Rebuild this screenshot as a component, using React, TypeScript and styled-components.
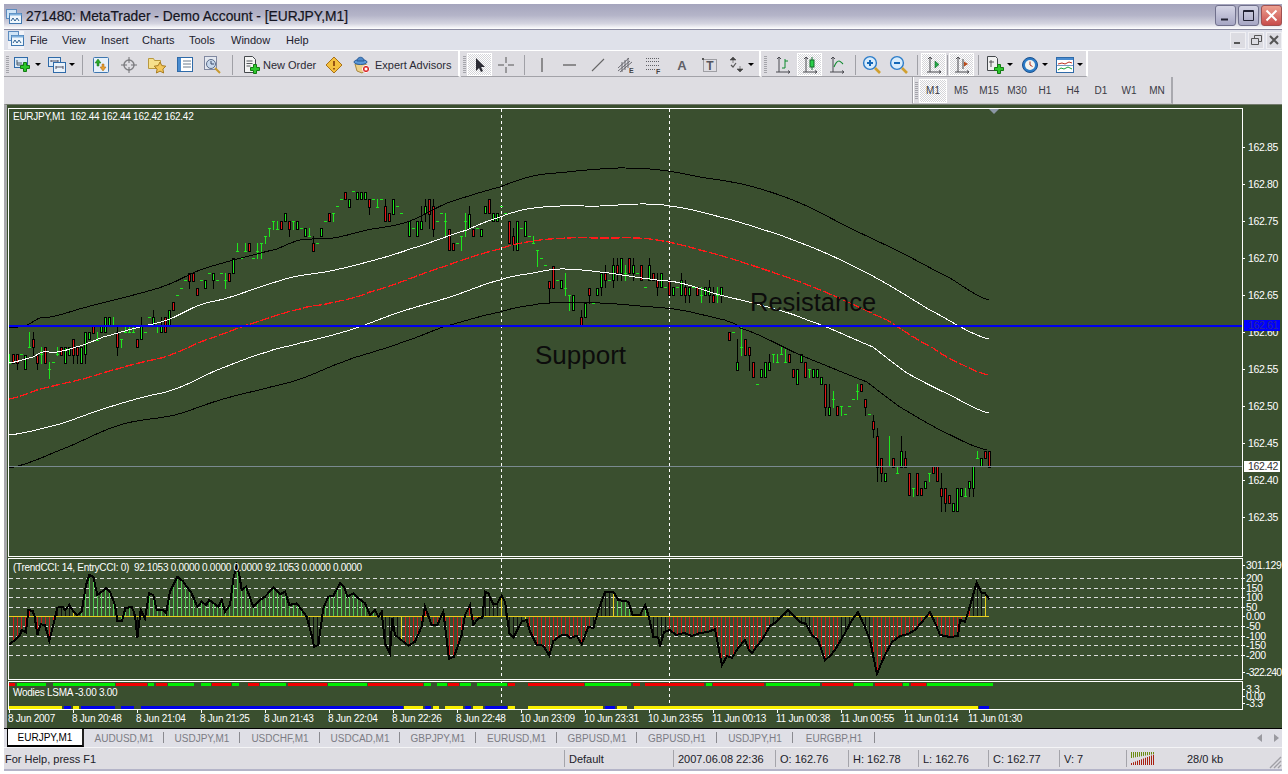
import React from 'react';
import styled, { createGlobalStyle } from 'styled-components';

const CHART_BG = '#3a4f2f';
const UI_FONT = '"Liberation Sans", Arial, sans-serif';

const GlobalStyle = createGlobalStyle`
  html, body {
    margin: 0;
    background: #fff;
    font-family: ${UI_FONT};
  }
`;

const Window = styled.div`
  display: flex;
  flex-direction: column;
  width: 1278px;
  margin: 4px 0 0 4px;
  overflow: hidden;
`;

/* title bar */

const TitleBar = styled.div`
  display: flex;
  align-items: center;
  height: 25px;
  padding: 0 0 0 2px;
  gap: 4px;
  background: linear-gradient(#a5a5bd 0%, #b4b4c8 45%, #d4d4e0 78%, #ffffff 100%);
  border-bottom: 1px solid #8c8ca2;
`;

const TitleText = styled.span`
  flex: 1;
  font-size: 13.8px;
  color: #141420;
  white-space: nowrap;
  -webkit-text-stroke: 0.2px #141420;
`;

const CaptionButtons = styled.div`
  display: flex;
  gap: 2px;
  margin-top: -2px;
`;

const CaptionButton = styled.div<{ $close?: boolean }>`
  display: flex;
  align-items: center;
  justify-content: center;
  width: 21px;
  height: 21px;
  box-sizing: border-box;
  border: 1px solid ${({ $close }) => ($close ? '#a05050' : '#70708c')};
  border-radius: 3px;
  background: ${({ $close }) =>
    $close ? 'linear-gradient(#eda090, #c84c4c)' : 'linear-gradient(#d6d6e6, #a6a6c4)'};
`;

/* menu bar */

const MenuBar = styled.div`
  display: flex;
  align-items: center;
  height: 20px;
  padding-left: 4px;
  background: #dfe1ea;
  font-size: 11px;
  color: #20202c;
`;

const MenuIcon = styled.div`
  width: 16px;
  height: 18px;
  margin-right: 6px;
  background: #f2f3f8;
`;

const MenuItem = styled.span<{ $w: number }>`
  width: ${({ $w }) => $w}px;
`;

const MdiButtons = styled.div`
  display: flex;
  gap: 2px;
  margin-left: auto;
`;

const MdiButton = styled.div`
  display: flex;
  align-items: center;
  justify-content: center;
  width: 16px;
  height: 17px;
  box-sizing: border-box;
  border: 1px solid #f0f0f4;
  background: #dcdce2;
`;

/* toolbars */

const ToolRow = styled.div`
  display: flex;
  height: 27px;
  box-sizing: border-box;
  border-top: 1px solid #fff;
  background: #dedde2;
`;

const ToolBar = styled.div`
  display: flex;
  align-items: center;
  box-sizing: border-box;
  height: 26px;
  padding-top: 2px;
  border-bottom: 1px solid #a2a2a8;
  border-right: 2px solid #fff;
  margin-right: 1px;
`;

const Grip = styled.div`
  width: 3px;
  height: 18px;
  margin: 0 1px 0 2px;
  background: repeating-linear-gradient(#a4a4aa 0 1px, transparent 1px 2px);
`;

const ToolButton = styled.div<{ $w: number; $pressed?: boolean }>`
  display: flex;
  align-items: center;
  justify-content: center;
  flex: none;
  width: ${({ $w }) => $w}px;
  height: 23px;
  box-sizing: border-box;
  ${({ $pressed }) =>
    $pressed &&
    `border: 1px solid #fff;
     background: repeating-conic-gradient(#ffffff 0 25%, #d4d4d8 0 50%) 0 0 / 2px 2px;`}
`;

const DropButton = styled(ToolButton)`
  justify-content: flex-start;
  gap: 3px;
  padding-left: ${({ $w }) => ($w > 34 ? 5 : 4)}px;
`;

const TextButton = styled(ToolButton)<{ $gap: number }>`
  justify-content: flex-start;
  gap: ${({ $gap }) => $gap}px;
  padding-left: 6px;
  font-size: 11px;
  color: #2a2a34;
  white-space: nowrap;
`;

const Caret = styled.span`
  width: 0;
  height: 0;
  border-left: 3px solid transparent;
  border-right: 3px solid transparent;
  border-top: 3px solid #000;
`;

const ToolSep = styled.div<{ $w: number }>`
  display: flex;
  justify-content: center;
  flex: none;
  width: ${({ $w }) => $w}px;

  &::before {
    content: '';
    width: 1px;
    height: 20px;
    background: #a0a0a6;
  }
`;

const PeriodRow = styled.div`
  display: flex;
  justify-content: flex-start;
  height: 27px;
  padding-left: 908px;
  background: #dedde2;
`;

const PeriodBar = styled.div`
  display: flex;
  align-items: center;
  box-sizing: border-box;
  height: 27px;
  padding-top: 1px;
  border-left: 1px solid #a2a2a8;
  border-right: 2px solid #a8a8ae;
  box-shadow: inset 1px 0 0 #fff;
  border-bottom: 1px solid #c8c8cc;
`;

const PeriodButton = styled(ToolButton)`
  width: 28px;
  height: 24px;
  font-size: 10px;
  color: #3a3a44;
`;

/* chart */

const ChartArea = styled.div`
  display: flex;
  flex-direction: column;
  box-sizing: border-box;
  height: 624px;
  padding: 3px 0 0 1px;
  background: ${CHART_BG};
  border-left: 3px solid #a8a8ac;
  border-top: 1px solid #727a6c;
  margin-top: 0;
`;

const PaneRow = styled.div<{ $h: number; $gap?: number }>`
  display: flex;
  height: ${({ $h }) => $h}px;
  margin-bottom: ${({ $gap }) => $gap ?? 0}px;
`;

const Pane = styled.div`
  position: relative;
  width: 1235px;
  flex: none;
  box-sizing: border-box;
  border: 1px solid #fff;
  overflow: hidden;

  svg {
    display: block;
  }
`;

const PaneLegend = styled.span<{ $top: number }>`
  position: absolute;
  left: 4px;
  top: ${({ $top }) => $top}px;
  font-size: 10px;
  letter-spacing: -0.28px;
  color: #fff;
  white-space: pre;
`;

const ChartNote = styled.span<{ $x: number; $y: number; $size: number }>`
  position: absolute;
  left: ${({ $x }) => $x}px;
  top: ${({ $y }) => $y}px;
  font-size: ${({ $size }) => $size}px;
  line-height: 30px;
  color: #0c0c0c;
`;

const ShiftMarker = styled.div`
  position: absolute;
  left: 980px;
  top: 0;
  width: 0;
  height: 0;
  border-left: 5px solid transparent;
  border-right: 5px solid transparent;
  border-top: 5px solid #8a96a4;
`;

const Axis = styled.div`
  position: relative;
  flex: 1;
  overflow: hidden;
`;

const AxisLabel = styled.span<{ $y: number; $left?: number; $tight?: boolean }>`
  position: absolute;
  left: ${({ $left }) => $left ?? 5}px;
  top: ${({ $y }) => $y - 6}px;
  font-size: 10.5px;
  letter-spacing: ${({ $tight }) => ($tight ? -0.75 : -0.35)}px;
  line-height: 12px;
  color: #fff;
  white-space: nowrap;

  &::before {
    content: '';
    position: absolute;
    left: ${({ $left }) => -($left ?? 5)}px;
    top: 6px;
    width: 2px;
    height: 1px;
    background: #fff;
  }
`;

const PriceTag = styled.span<{ $y: number; $blue?: boolean }>`
  position: absolute;
  left: 1px;
  top: ${({ $y }) => $y}px;
  width: 36px;
  height: 11px;
  padding-left: 4px;
  box-sizing: border-box;
  font-size: 10.5px;
  letter-spacing: -0.35px;
  line-height: 11px;
  color: ${({ $blue }) => ($blue ? '#2a2a9a' : '#333')};
  background: ${({ $blue }) => ($blue ? '#0000ff' : '#fff')};
`;

const TimeAxis = styled.div`
  display: flex;
  height: 19px;
`;

const TimeLabel = styled.span`
  position: relative;
  width: 64px;
  flex: none;
  padding-top: 3px;
  box-sizing: border-box;
  font-size: 10px;
  letter-spacing: -0.25px;
  line-height: 12px;
  color: #fff;
  white-space: nowrap;

  &::before {
    content: '';
    position: absolute;
    left: 1px;
    top: 0;
    width: 1px;
    height: 3px;
    background: #fff;
  }
`;

/* tabs */

const TabStrip = styled.div`
  display: flex;
  align-items: stretch;
  box-sizing: border-box;
  height: 20px;
  padding-left: 3px;
  background: #dfdfe6;
  border-top: 1px solid #000;
  border-bottom: 1px solid #f4f4f6;
`;

const Tab = styled.div<{ $w: number; $active?: boolean }>`
  position: relative;
  display: flex;
  align-items: center;
  justify-content: center;
  flex: none;
  width: ${({ $w }) => $w}px;
  box-sizing: border-box;
  font-size: 10px;
  color: ${({ $active }) => ($active ? '#000' : '#7c7c84')};
  ${({ $active }) =>
    $active
      ? `background: #fff;
         border-left: 1px solid #000;
         border-right: 2px solid #222;
         border-bottom: 2px solid #000;`
      : `&::after {
           content: '';
           position: absolute;
           right: 0;
           top: 3px;
           bottom: 4px;
           width: 1px;
           background: #8a8a90;
         }`}
`;

const TabArrows = styled.div`
  display: flex;
  align-items: center;
  gap: 12px;
  margin-left: auto;
  padding-right: 3px;
`;

/* status bar */

const StatusBar = styled.div`
  display: flex;
  align-items: stretch;
  height: 21px;
  background: #dedde2;
  border-bottom: 2px solid #b4b4c8;
  font-size: 11px;
  color: #202028;
`;

const StatusCell = styled.div<{ $w: number }>`
  display: flex;
  align-items: center;
  flex: none;
  width: ${({ $w }) => $w}px;
  box-sizing: border-box;
  padding-left: 5px;
  white-space: nowrap;
  background: linear-gradient(#a4a4aa, #a4a4aa) left center / 1px 17px no-repeat;
`;

const PlainCell = styled(StatusCell)`
  padding-left: 1px;
  background: none;
`;

const TrafficCell = styled(StatusCell)`
  flex: 1;
  gap: 32px;
  padding-left: 5px;
`;

const SizeGrip = styled.svg`
  align-self: flex-end;
  margin-left: auto;
  flex: none;
`;

/* ------------- drawings ------------- */

const Icon = styled.svg`
  display: block;
  flex: none;
`;

const Plus = ({ x, y }: { x: number; y: number }) => (
  <path
    d={`M${x + 3.5} ${y + 0.5}h3v3h3v3h-3v3h-3v-3h-3v-3h3z`}
    fill="#2cc82c"
    stroke="#137a13"
  />
);

const AppGlyph = () => (
  <Icon width="16" height="16" viewBox="0 0 16 16">
    <rect x="0.5" y="0.5" width="10" height="9" fill="#cfe4f6" stroke="#5b8bbf" />
    <rect x="3.5" y="4.5" width="12" height="10" fill="#eef6fc" stroke="#3f77b0" />
    <rect x="3.5" y="4.5" width="12" height="2" fill="#7fb0dc" />
    <path d="M5 12l2-3 2 3 2-3 2 3" fill="none" stroke="#2f5f90" />
  </Icon>
);

const NewChartIcon = () => (
  <Icon width="18" height="18" viewBox="0 0 18 18">
    <rect x="0.5" y="1.5" width="13" height="10" fill="#d8e8f6" stroke="#2f6aa8" />
    <path d="M3 4v5h8M3 7h5" fill="none" stroke="#4a5a6a" />
    <Plus x={6} y={6} />
  </Icon>
);

const ProfilesIcon = () => (
  <Icon width="18" height="18" viewBox="0 0 18 18">
    <rect x="0.5" y="1.5" width="12" height="9" fill="#dfeaf6" stroke="#2f6aa8" />
    <rect x="5.5" y="6.5" width="12" height="10" fill="#eaf2fa" stroke="#2f6aa8" />
    <path d="M3 5h7M3 4v2M10 4v2M8 11h7M8 10v3M15 10v3" stroke="#556" fill="none" />
  </Icon>
);

const MarketWatchIcon = () => (
  <Icon width="18" height="18" viewBox="0 0 18 18">
    <rect x="1.5" y="1.5" width="15" height="15" rx="1" fill="#e6f0fa" stroke="#3f77b0" />
    <path d="M6 3l3 4H7v3H5V7H3z" fill="#28a828" stroke="#187018" strokeWidth="0.5" />
    <path d="M11 15l-3-4h2V8h2v3h2z" fill="#e8a030" stroke="#a06010" strokeWidth="0.5" />
  </Icon>
);

const TargetIcon = () => (
  <Icon width="18" height="18" viewBox="0 0 18 18">
    <circle cx="9" cy="9" r="5" fill="none" stroke="#808084" strokeWidth="1.4" />
    <path d="M9 1v6M9 11v6M1 9h6M11 9h6" stroke="#707074" />
  </Icon>
);

const FavoritesIcon = () => (
  <Icon width="20" height="20" viewBox="0 0 20 20">
    <path d="M1.5 3.5h5l1 2h6v8h-12z" fill="#f6e08c" stroke="#b89840" />
    <path d="M13 7l1.8 3.6 4 .6-2.9 2.8.7 4-3.6-1.9-3.6 1.9.7-4-2.9-2.8 4-.6z" fill="#f4c85c" stroke="#a87c20" />
  </Icon>
);

const NavigatorIcon = () => (
  <Icon width="17" height="17" viewBox="0 0 17 17">
    <rect x="0.5" y="1.5" width="15" height="14" fill="#fff" stroke="#2f6aa8" />
    <rect x="1" y="2" width="3" height="13" fill="#4a8cd0" />
    <path d="M6 5h8M6 8h8M6 11h8" stroke="#6a7a8c" />
  </Icon>
);

const TesterIcon = () => (
  <Icon width="20" height="20" viewBox="0 0 20 20">
    <rect x="1.5" y="1.5" width="12" height="13" fill="#e4e8f0" stroke="#8088a0" />
    <circle cx="8" cy="9" r="4.5" fill="#c8d8ec" stroke="#5a6a88" />
    <path d="M8 6v3h3" stroke="#384868" fill="none" />
    <path d="M12 13l5 5" stroke="#c89a30" strokeWidth="2" />
  </Icon>
);

const NewOrderIcon = () => (
  <Icon width="18" height="20" viewBox="0 0 18 20">
    <path d="M1.5 1.5h8l3 3v13h-11z" fill="#f4f4f4" stroke="#44484c" />
    <path d="M3.5 6h6M3.5 8.5h6M3.5 11h4" stroke="#55585c" />
    <Plus x={7} y={9} />
  </Icon>
);

const WarnIcon = () => (
  <Icon width="18" height="18" viewBox="0 0 18 18">
    <path d="M9 1l8 8-8 8-8-8z" fill="#f4c040" stroke="#a87018" />
    <path d="M9 5v5M9 12v1.6" stroke="#803808" strokeWidth="1.6" />
  </Icon>
);

const ExpertIcon = () => (
  <Icon width="18" height="18" viewBox="0 0 18 18">
    <path d="M2 8h11v6l-4 3-5-2z" fill="#ecd088" stroke="#a88840" />
    <ellipse cx="7.5" cy="6" rx="6.5" ry="2.5" fill="#5c9ad8" stroke="#2c5c98" />
    <path d="M4 5c0-5 7-5 7 0z" fill="#4c88c8" stroke="#2c5c98" />
    <circle cx="13" cy="13" r="3.6" fill="#d81818" stroke="#fff" />
    <rect x="11.6" y="11.6" width="2.8" height="2.8" fill="#fff" />
  </Icon>
);

const PointerIcon = () => (
  <Icon width="12" height="16" viewBox="0 0 12 16">
    <path d="M2 1v13l3-3 2 4 2-1-2-4h4z" fill="#2c2c34" />
  </Icon>
);

const CrossIcon = () => (
  <Icon width="16" height="16" viewBox="0 0 16 16">
    <path d="M8 0v6M8 10v6M0 8h6M10 8h6" stroke="#555" />
  </Icon>
);

const VLineIcon = () => (
  <Icon width="14" height="14" viewBox="0 0 14 14">
    <path d="M7 0v14" stroke="#555" strokeWidth="1.2" />
  </Icon>
);

const HLineIcon = () => (
  <Icon width="14" height="14" viewBox="0 0 14 14">
    <path d="M0 7h13" stroke="#555" strokeWidth="1.2" />
  </Icon>
);

const DiagLineIcon = () => (
  <Icon width="14" height="14" viewBox="0 0 14 14">
    <path d="M1 13L13 1" stroke="#666" strokeWidth="1.1" />
  </Icon>
);

const FibChannelIcon = () => (
  <Icon width="18" height="18" viewBox="0 0 18 18">
    <path d="M1 12L12 2M1 15L13 5M3 16L15 6M5 6v10M8 4v10M11 2v10" stroke="#606066" fill="none" strokeWidth="0.9" />
    <text x="12" y="17" fontSize="7" fontWeight="700" fill="#444" fontFamily={UI_FONT}>E</text>
  </Icon>
);

const FibLinesIcon = () => (
  <Icon width="18" height="18" viewBox="0 0 18 18">
    <path d="M1 2.5h13M1 5.5h13M1 9.5h13M1 13.5h9" stroke="#606066" strokeDasharray="1 1" fill="none" />
    <text x="11" y="17.5" fontSize="7" fontWeight="700" fill="#444" fontFamily={UI_FONT}>F</text>
  </Icon>
);

const TextToolIcon = () => (
  <Icon width="16" height="16" viewBox="0 0 16 16">
    <text x="8" y="13" textAnchor="middle" fontSize="13" fontWeight="700" fill="#606066" fontFamily={UI_FONT}>A</text>
  </Icon>
);

const LabelToolIcon = () => (
  <Icon width="16" height="16" viewBox="0 0 16 16">
    <rect x="1.5" y="2.5" width="13" height="12" fill="none" stroke="#606066" strokeDasharray="1 1" />
    <rect x="0" y="1" width="2" height="2" fill="#555" />
    <text x="8" y="13" textAnchor="middle" fontSize="12" fontWeight="700" fill="#55555c" fontFamily={UI_FONT}>T</text>
  </Icon>
);

const ArrowsIcon = () => (
  <Icon width="16" height="16" viewBox="0 0 16 16">
    <path d="M4 0l3 3H1zM4 3v3M11 15l-3-3h6zM11 12V9" fill="#444" stroke="#444" strokeWidth="0.6" />
    <path d="M2 8l2 2 3-4" fill="none" stroke="#555" strokeWidth="1.2" />
  </Icon>
);

const Axes = () => <path d="M4 1v15M1 16h14M4 1l-2 2M4 1l2 2M15 16l-2-1.5M15 16l-2 1.5" stroke="#4a4a50" fill="none" />;

const BarChartIcon = () => (
  <Icon width="16" height="18" viewBox="0 0 16 18">
    <Axes />
    <path d="M10 3v9M7 12h3M10 5h3" stroke="#0a8a2a" fill="none" />
  </Icon>
);

const CandleChartIcon = () => (
  <Icon width="16" height="18" viewBox="0 0 16 18">
    <Axes />
    <path d="M10 1v13" stroke="#107030" />
    <rect x="8" y="4" width="4" height="7" fill="#28d048" stroke="#106a28" />
  </Icon>
);

const LineChartIcon = () => (
  <Icon width="16" height="18" viewBox="0 0 16 18">
    <Axes />
    <path d="M5 11c2-5 4-6 5-6s3 2 4 3" fill="none" stroke="#108a30" strokeWidth="1.1" />
  </Icon>
);

const ZoomIcon = ({ plus }: { plus?: boolean }) => (
  <Icon width="20" height="20" viewBox="0 0 20 20">
    <circle cx="8" cy="8" r="6.4" fill="#d8ecfc" stroke="#2c7cc8" strokeWidth="1.4" />
    <path d="M5 8h6" stroke="#1468b8" strokeWidth="2" />
    {plus && <path d="M8 5v6" stroke="#1468b8" strokeWidth="2" />}
    <path d="M13 13l5 5" stroke="#d0a030" strokeWidth="2.6" />
  </Icon>
);

const AutoScrollIcon = () => (
  <Icon width="16" height="18" viewBox="0 0 16 18">
    <Axes />
    <path d="M9 5v7l4-3.5z" fill="#24a848" stroke="#106a28" strokeWidth="0.6" />
  </Icon>
);

const ChartShiftIcon = () => (
  <Icon width="16" height="18" viewBox="0 0 16 18">
    <Axes />
    <path d="M9 3v10" stroke="#444" />
    <path d="M14 8l-4-2.5v5z" fill="#b84818" />
  </Icon>
);

const IndicatorsIcon = () => (
  <Icon width="18" height="20" viewBox="0 0 18 20">
    <path d="M1.5 1.5h8l2 2v12h-10z" fill="#f0f0f0" stroke="#44484c" />
    <path d="M5 5v7M3 7h5" stroke="#555" />
    <Plus x={8} y={9} />
  </Icon>
);

const ClockIcon = () => (
  <Icon width="18" height="18" viewBox="0 0 18 18">
    <circle cx="9" cy="9" r="7.5" fill="#2c7cc8" stroke="#1c508c" />
    <circle cx="9" cy="9" r="5" fill="#f4f4ee" />
    <path d="M9 5.5V9l2.5 1.5" stroke="#b03020" fill="none" />
  </Icon>
);

const TemplateIcon = () => (
  <Icon width="18" height="16" viewBox="0 0 18 16">
    <rect x="0.5" y="0.5" width="17" height="15" fill="#fff" stroke="#2f6aa8" />
    <rect x="1" y="1" width="16" height="2" fill="#4a8cd0" />
    <path d="M2 7l4-1 3 1 4-2 3 1" stroke="#c03020" fill="none" />
    <path d="M1 8.5h16" stroke="#7a9ac0" />
    <path d="M2 13l3-2 3 1 4-2 4 2" stroke="#18a038" fill="none" />
  </Icon>
);

const TrafficIcon = () => (
  <Icon width="24" height="13" viewBox="0 0 24 13">
    {Array.from({ length: 12 }, (_, i) => (
      <g key={i}>
        <rect x={i * 2} y="0" width="1" height={Math.max(1, 6 - i * 0.35)} fill="#6a8a10" />
        <rect x={i * 2} y={11 - i * 0.75} width="1" height={2 + i * 0.75} fill="#a82010" />
      </g>
    ))}
  </Icon>
);

/* ------------- chart data, read off the picture at 3x ------------- */

// [kind, x, top, bottom, wickTop?, wickBottom?]; kind r/g = candle, d = doji, t = lone tick
type Bar = [string, number, number, number?, number?, number?];

const segA: Bar[] = [
  ['d',28,552,578,578],['r',40,552,578],['r',52,552,578,552,598],['t',64,553],['g',76,554,598],['d',88,487,532,532],
  ['r',100,508,532,487,555],['r',112,556,578,556,598],['d',124,532,578,553],['r',136,532,578],['d',148,576,623,598],
  ['t',160,577],['d',172,532,555,553],['r',184,532,554],['g',196,532,578],['g',208,532,554],['r',220,508,554,508,578],
  ['r',232,532,554,532,578],['g',244,532,578],['g',256,487,553,487,578],['g',268,487,508],['r',280,464,488],['d',292,487,510,510],
  ['g',304,464,487],['g',316,442,487],['g',328,442,464],['d',340,442,464,464],['r',352,487,532,471,555],['d',364,508,532,508],
  ['d',376,470,487,487],['d',388,470,487,487],['d',400,470,487,487],['r',412,508,532],['g',424,464,508,442,508],['t',436,487],
  ['t',448,442],['g',460,442,464,420,464],['d',472,464,487,464],['g',484,464,487,442,487],['r',496,442,487],['g',508,420,464],
  ['r',520,397,420],['t',532,376],['t',544,355],['t',556,331],['r',568,310,332,310,355],['r',580,310,332],['r',592,355,376],
  ['t',604,331],['g',616,331,355],['t',628,310],['g',640,310,331,310,355],['t',652,331],['t',664,310],['d',676,310,355,331],
  ['r',688,310,332],['g',700,265,310],['d',712,220,242,242],['t',724,265],['d',736,220,242,242],['r',748,220,242],['t',760,265],
  ['d',772,220,265,242],['d',784,220,265,220],['d',796,198,220,198],['d',808,175,198,175],['d',820,153,176,153],['d',832,153,176,176],
  ['r',844,153,176],['g',856,130,153],['r',868,153,176,153,198],['d',880,153,176,153],['g',892,153,176],
];

const segB: Bar[] = [
  ['t',4,175],['g',16,175,198],['d',28,175,198,198],['r',40,220,242,198,242],['t',52,220],['g',64,175,198],['t',76,154],['r',88,130,154],
  ['d',100,130,154,130],['t',112,109],['t',124,87],['r',136,65,88],['g',148,88,110],['t',160,64],['g',172,65,88],['g',184,65,88],
  ['g',196,65,88],['r',208,88,110,88,131],['t',220,87],['d',232,87,110,110],['t',244,87],['r',256,109,154,87,154],['r',268,130,154],
  ['g',280,88,131],['t',292,109],['t',304,130],['g',328,154,199],['t',340,175],['g',352,154,199],['g',364,154,176,108,176],
  ['g',376,109,130,87,154],['r',388,88,131,87,175],['r',400,109,176,87,199],['t',412,154],['t',424,130],['d',436,130,197,154],
  ['r',448,176,241],['r',460,220,241],['t',472,219],['d',484,198,241,198],['d',496,130,199,154],['g',508,131,175,109,175],
  ['r',520,176,199],['t',532,175],['g',544,176,199],['g',556,109,130],['r',568,88,130],['g',580,130,154],['g',592,130,154],
  ['t',604,108],['t',616,130],['r',628,154,220],['r',640,199,221,175,241],['g',652,154,241],['t',664,175],['g',676,154,199],
  ['t',688,198],['d',700,198,220,220],['d',712,241,287,241],['t',724,265],['t',736,286],['r',748,332,355,332,398],['r',760,287,355],
  ['t',772,331],['g',784,331,355],['d',796,310,376,355],['d',808,376,421,376],['g',820,376,421],['t',832,397],['r',844,442,464,420,464],
  ['g',856,398,442],['r',868,355,376,355,400],['t',880,398],['g',892,355,376],
];

const segC: Bar[] = [
  ['g',4,309,351,309,375],['r',16,309,330,285,351],['t',28,330],['g',40,285,330,264,351],['r',52,285,309,264,330],['g',64,264,309,264,330],
  ['d',76,285,330,309],['r',88,264,309],['g',100,285,309,264,330],['t',112,309],['r',124,285,330],['t',136,351],['g',148,285,330,264,330],
  ['r',160,309,330],['r',172,330,351,309,375],['g',184,309,351],['t',196,351],['r',208,330,375],['g',220,351,375],['t',232,351],
  ['g',244,330,375,309,375],['r',256,351,375,330,396],['g',268,351,375,351,396],['t',280,351],['r',292,351,375],['d',304,351,396,375],
  ['g',316,351,375],['g',328,351,375,330,396],['r',340,375,396,351,396],['d',352,351,396,375],['g',364,351,375,351,396],
];

const segD: Bar[] = [
  ['r',88,37,60],['t',100,37],['g',112,127,150,58,150],['d',124,22,104,82],['r',136,58,104],['r',148,82,104,82,150],['r',160,127,172],
  ['t',172,193],['g',184,148,172],['g',196,127,172],['g',208,127,149,103,149],['d',220,103,127,103],['d',232,103,127,127],['d',244,82,103,103],
  ['d',256,82,127,127],['r',268,103,127],['r',280,148,172],['g',292,148,193],['g',304,103,127],['r',316,127,172],['d',328,148,172,148],
  ['g',340,148,172],['g',352,148,172],['g',364,172,193],['r',376,193,260,193,284],['g',388,260,284,193,284],['d',400,214,260,238],
  ['r',412,259,284],['d',424,259,284,259],['t',436,283],['t',448,259],['t',460,238],['d',472,193,238,214],['r',484,193,214],
  ['r',496,238,260,238,284],['t',508,283],['r',520,304,326,284,350],['r',532,349,440,325,482],['r',544,415,460,415,482],['g',556,460,482],
  ['d',568,349,439,439],['r',580,415,440],['d',592,439,460,460],['g',604,394,440,349,440],['r',616,415,440,394,440],['r',628,460,526],
  ['d',640,505,527,505],['r',652,460,526],['r',664,505,526],['g',676,482,505],['d',688,460,482,460],['r',700,439,460],['r',712,439,482],
  ['r',724,505,527,460,572],['r',736,505,550,505,572],['r',748,526,550],['g',760,550,572],['g',772,505,572],['g',784,505,527],
  ['d',796,505,527,527],['g',808,482,505,482,527],['g',820,439,505,439,527],['d',832,394,415,415],['g',844,415,439],['r',856,394,415],['r',868,394,440],
];

const BAR_SEGMENTS: [Bar[], number, number][] = [
  [segA, 0, 170],
  [segB, 300, 170],
  [segC, 600, 170],
  [segD, 700, 320],
];

const TICK_GREEN = '#1ee61e';

const Candles = () => (
  <g shapeRendering="crispEdges">
    {BAR_SEGMENTS.flatMap(([bars, x0, y0]) =>
      bars.map((bar, n) => {
        const [kind, zx, a, b, c, d] = bar;
        const col = Math.floor(x0 + zx / 3);
        const py = (v: number) => Math.round(y0 + v / 3);
        const key = `${x0}-${n}`;
        if (kind === 't') {
          return <rect key={key} x={col - 1} y={py(a)} width={3} height={1} fill={TICK_GREEN} />;
        }
        if (kind === 'd') {
          return (
            <g key={key} fill={TICK_GREEN}>
              <rect x={col} y={py(a)} width={1} height={py(b!) - py(a) + 1} />
              <rect x={col - 1} y={py(c!)} width={3} height={1} />
            </g>
          );
        }
        const top = py(c ?? a);
        const bottom = py(d ?? b!);
        return (
          <g key={key}>
            <rect x={col} y={top} width={1} height={bottom - top + 1} fill="#000" />
            <rect x={col - 1} y={py(a)} width={3} height={py(b!) - py(a) + 1} fill="#000" />
            <rect
              x={col}
              y={py(a) + 1}
              width={1}
              height={Math.max(1, py(b!) - py(a) - 1)}
              fill={kind === 'r' ? '#e01818' : '#1ee61e'}
            />
          </g>
        );
      }),
    )}
  </g>
);

const pts = (list: number[][]) => list.map(([x, y]) => `${x},${y}`).join(' ');

// catmull-rom through the read-off points, sampled every 2px so the bands stay curved
const smooth = (list: number[][]) => {
  const out: number[][] = [];
  for (let i = 0; i < list.length - 1; i++) {
    const p0 = list[Math.max(i - 1, 0)];
    const p1 = list[i];
    const p2 = list[i + 1];
    const p3 = list[Math.min(i + 2, list.length - 1)];
    const steps = Math.max(1, Math.round((p2[0] - p1[0]) / 2));
    for (let s = 0; s < steps; s++) {
      const t = s / steps;
      const y =
        0.5 *
        (2 * p1[1] +
          (p2[1] - p0[1]) * t +
          (2 * p0[1] - 5 * p1[1] + 4 * p2[1] - p3[1]) * t * t +
          (3 * p1[1] - p0[1] - 3 * p2[1] + p3[1]) * t * t * t);
      out.push([p1[0] + (p2[0] - p1[0]) * t, y]);
    }
  }
  out.push(list[list.length - 1]);
  return out;
};

const BANDS: { color: string; width: number; dash?: string; points: number[][] }[] = [
  {
    color: '#000',
    width: 1,
    points: [[9,328],[27,325],[40,318],[50,317],[87,307],[110,301],[137,294],[167,285],[200,270],[233,260],[277,249],[300,240],[333,238],[367,230],[407,222],[447,203],[500,187],[533,176],[567,172],[600,169],[625,168],[660,170],[700,177],[750,186],[800,203],[850,228],[900,252],[950,278],[989,300]],
  },
  {
    color: '#fff',
    width: 1,
    points: [[9,363],[33,357],[43,352],[57,352],[83,345],[103,337],[140,327],[167,320],[200,305],[227,298],[260,287],[293,277],[330,271],[367,262],[410,249],[467,230],[500,217],[527,209],[560,206],[600,206],[640,204],[670,206],[720,217],[780,235],[830,255],[880,280],[930,310],[989,339]],
  },
  {
    color: '#ff1a1a',
    width: 1.3,
    dash: '9 2',
    points: [[9,399],[40,389],[83,379],[117,369],[143,362],[167,356],[200,342],[247,325],[300,309],[330,303],[370,292],[443,267],[500,249],[533,241],[567,238],[600,238],[650,239],[700,250],[760,268],[820,290],[887,320],[933,348],[963,365],[989,375]],
  },
  {
    color: '#fff',
    width: 1,
    points: [[9,435],[60,424],[100,410],[140,398],[175,389],[217,370],[267,352],[300,343],[350,330],[400,312],[450,297],[500,280],[533,273],[560,269],[600,272],[650,279],[680,283],[720,295],[760,305],[807,320],[873,347],[907,373],[950,395],[989,413]],
  },
  {
    color: '#000',
    width: 1,
    points: [[9,468],[60,450],[120,425],[175,415],[220,400],[263,389],[300,379],[343,362],[373,352],[400,343],[443,327],[500,312],[533,305],[550,303],[600,303],[640,306],[680,310],[725,320],[740,328],[800,355],[867,382],[900,407],[940,430],[987,450]],
  },
];

const PRICE_LEVELS = ['162.85','162.80','162.75','162.70','162.65','162.60','162.55','162.50','162.45','162.40','162.35'];

const CCI_LEFT = [[28,268],[45,255],[60,240],[65,225],[78,232],[85,165],[98,168],[104,185],[112,240],[122,208],[135,210],[148,258],[160,210],[172,158],[188,155],[195,165],[208,150],[222,172],[232,180],[245,170],[258,90],[268,60],[280,65],[292,120],[318,100],[330,110],[345,150],[352,198],[366,198],[376,160],[395,155],[405,180],[412,250],[422,165],[435,190],[447,115],[460,120],[470,165],[490,165],[498,175],[510,110],[532,65],[548,78],[575,115],[592,155],[605,140],[618,150],[628,135],[655,155],[665,135],[675,170],[690,150],[700,70],[710,30],[718,60],[725,105],[738,95],[760,155],[780,135],[795,125],[820,98],[840,118],[855,110],[868,150],[890,145],[920,185],[935,240],[942,275],[955,270],[970,160],[985,125],[1000,122],[1020,85]];
const CCI_MID = [[0,80],[12,95],[22,125],[40,115],[55,130],[75,145],[90,180],[105,165],[115,185],[125,170],[135,265],[150,295],[157,190],[165,240],[190,260],[205,272],[225,260],[245,215],[255,155],[275,210],[292,210],[310,170],[327,312],[342,305],[365,240],[375,180],[390,150],[400,210],[415,190],[427,190],[435,110],[445,115],[460,148],[470,148],[485,122],[495,140],[508,235],[520,248],[545,200],[560,195],[570,230],[590,270],[610,272],[628,302],[640,258],[665,240],[680,240],[690,250],[710,242],[725,268],[745,215],[760,220],[775,165],[795,112],[820,110],[835,135],[865,140],[878,180],[900,180],[915,150],[925,180],[940,245],[955,248],[960,275]];
const CCI_RIGHT = [[664,632],[670,630],[676,635],[684,633],[692,636],[700,633],[708,632],[715,629],[719,650],[722,665],[727,656],[732,658],[738,648],[745,640],[749,650],[752,653],[757,646],[762,640],[770,626],[776,622],[782,616],[788,610],[794,616],[800,622],[806,624],[812,635],[818,640],[825,660],[830,656],[835,650],[845,633],[852,620],[858,612],[864,625],[870,640],[874,660],[877,674],[881,664],[885,655],[892,642],[900,636],[908,634],[915,630],[922,622],[930,612],[936,625],[940,635],[950,637],[958,636]];
const CCI_END = [[0,195],[15,200],[25,170],[50,82],[65,115],[75,115],[88,132]];

const CCI_POINTS = [
  ...CCI_LEFT.map(([x, y]) => [x / 3, 555 + y / 3]),
  ...CCI_MID.map(([x, y]) => [340 + x / 3, 555 + y / 3]).slice(1),
  ...CCI_RIGHT,
  ...CCI_END.map(([x, y]) => [960 + x / 3, 555 + y / 3]),
];

const CCI_ZERO = 616;
const CCI_LEVELS = [578, 588, 597, 607, 626, 636, 645, 655];
const CCI_SCALE: [string, number][] = [
  ['200',578],['150',588],['100',597],['50',607],['0.00',616],['-50',626],['-100',636],['-150',645],['-200',655],
];

const HIST_COLORS: [number, number, string][] = [
  [0, 56, '#d01818'], [56, 72, '#101010'], [72, 75, '#e8d020'], [75, 132, '#50c850'], [132, 143, '#101010'], [143, 308, '#50c850'],
  [308, 322, '#101010'], [322, 375, '#50c850'], [375, 400, '#101010'], [400, 403, '#e8d020'], [403, 478, '#d01818'],
  [478, 500, '#101010'], [500, 503, '#e8d020'], [503, 524, '#101010'], [524, 527, '#e8d020'], [527, 592, '#d01818'],
  [592, 612, '#101010'], [612, 615, '#e8d020'], [615, 632, '#50c850'], [632, 644, '#101010'], [644, 648, '#50c850'],
  [648, 668, '#101010'], [668, 770, '#d01818'], [770, 810, '#101010'], [810, 840, '#d01818'], [840, 870, '#101010'],
  [870, 970, '#d01818'], [970, 984, '#101010'], [984, 987, '#e8d020'], [987, 991, '#50c850'],
];

const cciAt = (x: number) => {
  for (let i = 1; i < CCI_POINTS.length; i++) {
    const [x0, y0] = CCI_POINTS[i - 1];
    const [x1, y1] = CCI_POINTS[i];
    if (x >= x0 && x <= x1) return y0 + ((y1 - y0) * (x - x0)) / Math.max(x1 - x0, 0.1);
  }
  return CCI_ZERO;
};

const HIST_BARS = Array.from({ length: 245 }, (_, i) => 13 + i * 4).map((x) => ({
  x,
  y: cciAt(x + 0.5),
  color: HIST_COLORS.find(([a, b]) => x >= a && x < b)?.[2] ?? '#50c850',
}));

const LSMA_TOP: [string, number, number][] = [
  ['r',28,45],['g',50,138],['g',158,345],['r',348,440],['g',445,463],['r',468,500],['g',505,583],['g',603,632],['r',636,692],['g',697,716],
  ['r',745,776],['g',781,858],['r',865,980],['g',985,1100],['r',1105,1270],['g',1273,1292],['g',1310,1340],['r',1343,1376],['g',1380,1412],['g',1430,1520],['r',1525,1545],
];
const LSMA_TOP_R: [string, number, number][] = [
  ['r',17,130],['g',132,226],['r',230,243],['r',254,373],['g',377,389],['r',392,495],['g',499,609],['r',613,675],['g',679,716],['r',720,775],['g',777,790],['r',793,824],['g',826,961],
];
const LSMA_BOT: [string, number, number][] = [
  ['y',28,187],['b',193,212],['y',218,236],['b',242,344],['b',362,403],['b',423,1208],['y',1213,1268],['b',1275,1292],['y',1298,1316],['y',1334,1388],['b',1395,1412],['y',1418,1448],['b',1455,1520],['y',1525,1545],
];
const LSMA_BOT_R: [string, number, number][] = [
  ['y',17,168],['b',172,193],['y',197,217],['y',231,929],['b',932,952],
];
const LSMA_COLORS: Record<string, string> = { r: '#f00000', g: '#00ee00', y: '#f8f000', b: '#0000e8' };

const LsmaRow = ({ y, left, right }: { y: number; left: [string, number, number][]; right: [string, number, number][] }) => (
  <g shapeRendering="crispEdges">
    {left.map(([c, a, b]) => (
      <rect key={`l${a}`} x={a / 3} y={y} width={(b - a) / 3} height={3} fill={LSMA_COLORS[c]} />
    ))}
    {right.map(([c, a, b]) => (
      <rect key={`r${a}`} x={520 + a / 2.03} y={y} width={(b - a) / 2.03} height={3} fill={LSMA_COLORS[c]} />
    ))}
  </g>
);

const SessionLines = ({ top, bottom }: { top: number; bottom: number }) => (
  <g stroke="#fff" strokeDasharray="3 3" shapeRendering="crispEdges">
    <line x1="501.5" x2="501.5" y1={top} y2={bottom} />
    <line x1="669.5" x2="669.5" y1={top} y2={bottom} />
  </g>
);

const TIME_LABELS = [
  '8 Jun 2007','8 Jun 20:48','8 Jun 21:04','8 Jun 21:25','8 Jun 21:43','8 Jun 22:04','8 Jun 22:26','8 Jun 22:48',
  '10 Jun 23:09','10 Jun 23:31','10 Jun 23:55','11 Jun 00:13','11 Jun 00:38','11 Jun 00:55','11 Jun 01:14','11 Jun 01:30',
];

const TABS: [string, number][] = [
  ['AUDUSD,M1', 80],['USDJPY,M1', 76],['USDCHF,M1', 80],['USDCAD,M1', 80],['GBPJPY,M1', 76],['EURUSD,M1', 81],
  ['GBPUSD,M1', 80],['GBPUSD,H1', 80],['USDJPY,H1', 76],['EURGBP,H1', 82],
];

const PERIODS = ['M1','M5','M15','M30','H1','H4','D1','W1','MN'];

const MENU: [string, number][] = [['File',32],['View',39],['Insert',41],['Charts',47],['Tools',42],['Window',55],['Help',40]];

const STATUS: [string, number][] = [
  ['Default',109],['2007.06.08 22:36',102],['O: 162.76',73],['H: 162.78',70],['L: 162.76',70],['C: 162.77',71],['V: 7',67],
];

export default function App() {
  return (
    <>
      <GlobalStyle />
      <Window>
        <TitleBar>
          <AppGlyph />
          <TitleText>271480: MetaTrader - Demo Account - [EURJPY,M1]</TitleText>
          <CaptionButtons>
            <CaptionButton>
              <Icon width="11" height="11" viewBox="0 0 11 11"><path d="M1 9.5h7" stroke="#223" strokeWidth="2" /></Icon>
            </CaptionButton>
            <CaptionButton>
              <Icon width="13" height="13" viewBox="0 0 13 13"><path d="M1.5 1.5h10v10h-10zM1 2.5h11" stroke="#223" fill="none" /></Icon>
            </CaptionButton>
            <CaptionButton $close>
              <Icon width="13" height="13" viewBox="0 0 13 13"><path d="M1.5 1.5l10 10M11.5 1.5l-10 10" stroke="#fff" strokeWidth="2" /></Icon>
            </CaptionButton>
          </CaptionButtons>
        </TitleBar>

        <MenuBar>
          <MenuIcon><AppGlyph /></MenuIcon>
          {MENU.map(([label, w]) => (
            <MenuItem key={label} $w={w}>{label}</MenuItem>
          ))}
          <MdiButtons>
            <MdiButton>
              <Icon width="10" height="10" viewBox="0 0 10 10"><path d="M1 8h6" stroke="#555" strokeWidth="2" /></Icon>
            </MdiButton>
            <MdiButton>
              <Icon width="11" height="11" viewBox="0 0 11 11"><path d="M3.5 3V.5h7v6H8M.5 3.5h7v6h-7z" fill="none" stroke="#555" /></Icon>
            </MdiButton>
            <MdiButton>
              <Icon width="10" height="10" viewBox="0 0 10 10"><path d="M1 1l8 8M9 1l-8 8" stroke="#555" strokeWidth="2" /></Icon>
            </MdiButton>
          </MdiButtons>
        </MenuBar>

        <ToolRow>
          <ToolBar>
            <Grip />
            <DropButton $w={33}><NewChartIcon /><Caret /></DropButton>
            <DropButton $w={35}><ProfilesIcon /><Caret /></DropButton>
            <ToolSep $w={9} />
            <ToolButton $w={28}><MarketWatchIcon /></ToolButton>
            <ToolButton $w={28}><TargetIcon /></ToolButton>
            <ToolButton $w={28}><FavoritesIcon /></ToolButton>
            <ToolButton $w={28}><NavigatorIcon /></ToolButton>
            <ToolButton $w={28}><TesterIcon /></ToolButton>
            <ToolSep $w={10} />
            <TextButton $w={84} $gap={2}><NewOrderIcon />New Order</TextButton>
            <ToolButton $w={26}><WarnIcon /></ToolButton>
            <TextButton $w={111} $gap={4}><ExpertIcon />Expert Advisors</TextButton>
          </ToolBar>
          <ToolBar>
            <Grip />
            <ToolButton $w={25} $pressed><PointerIcon /></ToolButton>
            <ToolButton $w={28}><CrossIcon /></ToolButton>
            <ToolSep $w={8} />
            <ToolButton $w={28}><VLineIcon /></ToolButton>
            <ToolButton $w={28}><HLineIcon /></ToolButton>
            <ToolButton $w={28}><DiagLineIcon /></ToolButton>
            <ToolButton $w={28}><FibChannelIcon /></ToolButton>
            <ToolButton $w={28}><FibLinesIcon /></ToolButton>
            <ToolButton $w={28}><TextToolIcon /></ToolButton>
            <ToolButton $w={28}><LabelToolIcon /></ToolButton>
            <DropButton $w={35}><ArrowsIcon /><Caret /></DropButton>
          </ToolBar>
          <ToolBar>
            <Grip />
            <ToolButton $w={29}><BarChartIcon /></ToolButton>
            <ToolButton $w={25} $pressed><CandleChartIcon /></ToolButton>
            <ToolButton $w={30}><LineChartIcon /></ToolButton>
            <ToolSep $w={6} />
            <ToolButton $w={27}><ZoomIcon plus /></ToolButton>
            <ToolButton $w={28}><ZoomIcon /></ToolButton>
            <ToolSep $w={8} />
            <ToolButton $w={25} $pressed><AutoScrollIcon /></ToolButton>
            <ToolSep $w={3} />
            <ToolButton $w={25} $pressed><ChartShiftIcon /></ToolButton>
            <ToolSep $w={8} />
            <DropButton $w={34}><IndicatorsIcon /><Caret /></DropButton>
            <DropButton $w={36}><ClockIcon /><Caret /></DropButton>
            <DropButton $w={34}><TemplateIcon /><Caret /></DropButton>
          </ToolBar>
        </ToolRow>

        <PeriodRow>
          <PeriodBar>
            <Grip />
            {PERIODS.map((p, i) => (
              <PeriodButton key={p} $w={28} $pressed={i === 0}>{p}</PeriodButton>
            ))}
          </PeriodBar>
        </PeriodRow>

        <ChartArea>
          <PaneRow $h={449} $gap={1}>
            <Pane>
              <svg width="1233" height="447" viewBox="9 109 1233 447">
                <SessionLines top={109} bottom={556} />
                <Candles />
                <g fill="none" shapeRendering="crispEdges">
                  {BANDS.map((b, i) => (
                    <polyline key={i} points={pts(smooth(b.points))} stroke={b.color} strokeWidth={b.width} strokeDasharray={b.dash} />
                  ))}
                </g>
                <g shapeRendering="crispEdges">
                  <rect x="9" y="325" width="1233" height="2" fill="#0000f0" />
                  <rect x="9" y="466" width="1233" height="1" fill="#7a8a90" />
                </g>
              </svg>
              <PaneLegend $top={2}>EURJPY,M1  162.44 162.44 162.42 162.42</PaneLegend>
              <ShiftMarker />
              <ChartNote $x={526} $y={231} $size={26}>Support</ChartNote>
              <ChartNote $x={741} $y={178} $size={25.5}>Resistance</ChartNote>
            </Pane>
            <Axis>
              {PRICE_LEVELS.map((p, i) => (
                <AxisLabel key={p} $y={39 + i * 37}>{p}</AxisLabel>
              ))}
              <PriceTag $y={212} $blue>162.61</PriceTag>
              <PriceTag $y={353}>162.42</PriceTag>
            </Axis>
          </PaneRow>

          <PaneRow $h={122} $gap={1}>
            <Pane>
              <svg width="1233" height="120" viewBox="9 559 1233 120">
                <g stroke="#dcdcdc" strokeDasharray="4 3" shapeRendering="crispEdges">
                  {CCI_LEVELS.map((y) => (
                    <line key={y} x1="9" x2="1242" y1={y + 0.5} y2={y + 0.5} />
                  ))}
                </g>
                <SessionLines top={559} bottom={679} />
                <g shapeRendering="crispEdges">
                  {HIST_BARS.filter((b) => b.x < 992).map((b) => (
                    <line key={b.x} x1={b.x + 0.5} x2={b.x + 0.5} y1={CCI_ZERO} y2={b.y} stroke={b.color} />
                  ))}
                  <rect x="9" y={CCI_ZERO} width="980" height="1" fill="#e8d020" />
                </g>
                <polyline points={pts(CCI_POINTS)} fill="none" stroke="#000" strokeWidth="2" shapeRendering="crispEdges" />
              </svg>
              <PaneLegend $top={3}>(TrendCCI: 14, EntryCCI: 0)  92.1053 0.0000 0.0000 0.0000 92.1053 0.0000 0.0000</PaneLegend>
            </Pane>
            <Axis>
              <AxisLabel $y={7} $left={3}>301.1291</AxisLabel>
              {CCI_SCALE.map(([label, y]) => (
                <AxisLabel key={label} $y={y - 558} $left={3}>{label}</AxisLabel>
              ))}
              <AxisLabel $y={114} $left={3} $tight>-322.240</AxisLabel>
            </Axis>
          </PaneRow>

          <PaneRow $h={29}>
            <Pane>
              <svg width="1233" height="27" viewBox="9 682 1233 27">
                <SessionLines top={682} bottom={709} />
                <LsmaRow y={683} left={LSMA_TOP} right={LSMA_TOP_R} />
                <LsmaRow y={706} left={LSMA_BOT} right={LSMA_BOT_R} />
              </svg>
              <PaneLegend $top={5}>Wodies LSMA -3.00 3.00</PaneLegend>
            </Pane>
            <Axis>
              <AxisLabel $y={8} $left={3}>3.3</AxisLabel>
              <AxisLabel $y={15} $left={3}>0.00</AxisLabel>
              <AxisLabel $y={22} $left={3}>-3.3</AxisLabel>
            </Axis>
          </PaneRow>

          <TimeAxis>
            {TIME_LABELS.map((t) => (
              <TimeLabel key={t}>{t}</TimeLabel>
            ))}
          </TimeAxis>
        </ChartArea>

        <TabStrip>
          <Tab $w={77} $active>EURJPY,M1</Tab>
          {TABS.map(([label, w]) => (
            <Tab key={label} $w={w}>{label}</Tab>
          ))}
          <TabArrows>
            <Icon width="5" height="8" viewBox="0 0 5 8"><path d="M5 0v8L0 4z" fill="#9a9aa0" /></Icon>
            <Icon width="5" height="8" viewBox="0 0 5 8"><path d="M0 0v8l5-4z" fill="#9a9aa0" /></Icon>
          </TabArrows>
        </TabStrip>

        <StatusBar>
          <PlainCell $w={560}>For Help, press F1</PlainCell>
          {STATUS.map(([label, w]) => (
            <StatusCell key={label} $w={w}>{label}</StatusCell>
          ))}
          <TrafficCell $w={156}>
            <TrafficIcon />
            <span>28/0 kb</span>
            <SizeGrip width="14" height="14" viewBox="0 0 14 14">
              <path d="M13 2L2 13M13 6l-7 7M13 10l-3 3" stroke="#a0a0a6" strokeWidth="1.4" />
            </SizeGrip>
          </TrafficCell>
        </StatusBar>
      </Window>
    </>
  );
}
